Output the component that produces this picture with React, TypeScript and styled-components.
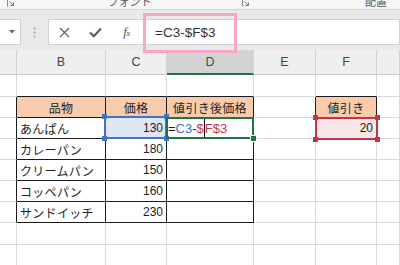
import React from "react";
import styled, { createGlobalStyle, css } from "styled-components";

const GlobalStyle = createGlobalStyle`
  html, body { margin: 0; padding: 0; background: #fff; }
  body {
    width: 400px; height: 265px; overflow: hidden;
    font-family: "Noto Sans CJK JP", "Noto Sans", sans-serif;
  }
`;

const Root = styled.div`
  position: relative;
  width: 400px;
  height: 265px;
  overflow: hidden;
  display: flex;
  flex-direction: column;
  background: #fff;
`;

/* ---------- ribbon strip ---------- */
const RibbonStrip = styled.div`
  flex: none;
  height: 9px;
  display: flex;
  overflow: hidden;
  background: #f6f6f6;
  border-bottom: 1px solid #d5d5d5;
`;

const RibbonGroup = styled.div<{ $w: number }>`
  flex: none;
  width: ${(p) => p.$w}px;
  display: flex;
  align-items: flex-end;
  padding-right: 2px;
  box-sizing: border-box;
`;

const GroupLabel = styled.span`
  flex: 1;
  text-align: center;
  font-family: "Noto Sans CJK JP", sans-serif;
  font-size: 11px;
  line-height: 11px;
  color: #555;
  margin-bottom: 2px;
  white-space: nowrap;
`;

const LauncherBox = styled.span`
  flex: none;
  display: flex;
  margin-bottom: 2px;
`;

const Launcher = () => (
  <LauncherBox>
    <svg width="8" height="8" viewBox="0 0 8 8">
      <path d="M7.5 0.5H0.5V7.5" fill="none" stroke="#8a8a8a" />
      <path d="M2.5 2.5L6.5 6.5M6.5 3.5V6.5H3.5" fill="none" stroke="#777" />
    </svg>
  </LauncherBox>
);

/* ---------- formula bar ---------- */
const FormulaBar = styled.div`
  flex: none;
  height: 40px;
  box-sizing: border-box;
  padding-top: 9px;
  display: flex;
  align-items: flex-start;
  background: #e9e9e9;
`;

const NameBox = styled.div`
  flex: none;
  width: 21px;
  height: 26px;
  box-sizing: border-box;
  background: #fff;
  border: 1px solid #cfcfcf;
  border-left: none;
  display: flex;
  align-items: center;
  justify-content: flex-end;
  padding-right: 5px;
`;

const Grip = styled.div`
  flex: none;
  width: 27px;
  height: 26px;
  display: flex;
  align-items: center;
  justify-content: center;
`;

const FxButtons = styled.div`
  flex: none;
  width: 97px;
  height: 26px;
  box-sizing: border-box;
  background: #fff;
  border: 1px solid #d3d3d3;
  border-right: none;
  display: flex;
  padding-right: 4px;
`;

const FxButton = styled.div`
  flex: none;
  width: 31px;
  display: flex;
  align-items: center;
  justify-content: center;
  color: #555;
`;

const FxGlyph = styled.span`
  font-family: "Liberation Serif", serif;
  font-style: italic;
  font-size: 13px;
  color: #555;
  letter-spacing: -0.5px;
  & > small { font-size: 9px; }
`;

const FormulaInput = styled.div`
  flex: 1;
  height: 26px;
  box-sizing: border-box;
  background: #fff;
  border: 1px solid #d3d3d3;
  display: flex;
  align-items: center;
  padding-left: 9px;
  font-family: "Liberation Sans", sans-serif;
  font-size: 13.5px;
  color: #333;
`;

const Highlight = styled.div`
  position: absolute;
  left: 143px;
  top: 13px;
  width: 94px;
  height: 40px;
  box-sizing: border-box;
  border: 3px solid #f4a8c6;
  pointer-events: none;
  z-index: 5;
`;

/* ---------- sheet ---------- */
const Sheet = styled.div`
  flex: 1;
  display: grid;
  grid-template-columns: 17px 89px 61px 87px 62px 61px 1fr;
  grid-template-rows: 25px 22px repeat(6, 21px) 22px 21px;
`;

const ColHead = styled.div<{ $active?: boolean }>`
  box-sizing: border-box;
  display: flex;
  align-items: center;
  justify-content: center;
  font-family: "Liberation Sans", sans-serif;
  font-size: 12.5px;
  color: #444;
  background: #efefef;
  border-right: 1px solid #d2d2d2;
  border-bottom: 1px solid #c9c9c9;
  ${(p) =>
    p.$active &&
    css`
      background: #d3d3d3;
      color: #1f5e3b;
      border-bottom: 2px solid #217346;
    `}
`;

const Cell = styled.div<{
  $fill?: string;
  $br?: boolean;
  $bb?: boolean;
  $align?: "left" | "right" | "center";
}>`
  position: relative;
  box-sizing: border-box;
  min-width: 0;
  display: flex;
  align-items: center;
  justify-content: ${(p) =>
    p.$align === "right" ? "flex-end" : p.$align === "center" ? "center" : "flex-start"};
  padding: 0 3px 0 3px;
  white-space: nowrap;
  background: ${(p) => p.$fill ?? "#fff"};
  border-right: 1px solid ${(p) => (p.$br ? "#1a1a1a" : "#dadada")};
  border-bottom: 1px solid ${(p) => (p.$bb ? "#1a1a1a" : "#dadada")};
`;

const JpText = styled.span`
  font-family: "Noto Sans CJK JP", sans-serif;
  font-size: 12px;
  letter-spacing: 0.3px;
  color: #1e1e1e;
`;

const NumText = styled.span`
  font-family: "Liberation Sans", sans-serif;
  font-size: 12px;
  color: #1e1e1e;
`;

const FormulaText = styled.span`
  display: flex;
  align-items: center;
  font-family: "Liberation Sans", sans-serif;
  font-size: 13px;
  color: #1e1e1e;
  margin-left: -2px;
`;

const Ref = styled.span<{ $c: string }>`
  color: ${(p) => p.$c};
`;

const Caret = styled.span`
  display: inline-block;
  width: 1px;
  height: 20px;
  background: #111;
`;

const Selection = styled.div<{ $c: string; $inset: string }>`
  position: absolute;
  inset: ${(p) => p.$inset};
  border: 2px solid ${(p) => p.$c};
  z-index: 3;
  pointer-events: none;
`;

const Handle = styled.span<{ $c: string; $pos: "tl" | "tr" | "bl" | "br"; $ring?: boolean }>`
  position: absolute;
  width: 5px;
  height: 5px;
  background: ${(p) => p.$c};
  ${(p) => (p.$pos[0] === "t" ? "top: -4px;" : "bottom: -4px;")}
  ${(p) => (p.$pos[1] === "l" ? "left: -4px;" : "right: -4px;")}
  ${(p) => p.$ring && "box-shadow: 0 0 0 1px #fff;"}
`;

type Spec = {
  content?: React.ReactNode;
  align?: "left" | "right" | "center";
  fill?: string;
  br?: boolean;
  bb?: boolean;
  sel?: React.ReactNode;
};

const ORANGE = "#f8cbad";
const BLUE = "#4472c4";
const GREEN = "#217346";
const RED = "#c3344a";

const fourHandles = (c: string) => (
  <>
    <Handle $c={c} $pos="tl" />
    <Handle $c={c} $pos="tr" />
    <Handle $c={c} $pos="bl" />
    <Handle $c={c} $pos="br" />
  </>
);

const jp = (t: string) => <JpText>{t}</JpText>;
const num = (t: string) => <NumText>{t}</NumText>;

const items: [string, string][] = [
  ["カレーパン", "180"],
  ["クリームパン", "150"],
  ["コッペパン", "160"],
  ["サンドイッチ", "230"],
];

const blank = (): Spec => ({});

const rows: Spec[][] = [
  // row 1
  [blank(), { bb: true }, { bb: true }, { bb: true }, blank(), { bb: true }, blank()],
  // row 2
  [
    { br: true },
    { content: jp("品物"), align: "center", fill: ORANGE, br: true, bb: true },
    { content: jp("価格"), align: "center", fill: ORANGE, br: true, bb: true },
    { content: jp("値引き後価格"), align: "center", fill: ORANGE, br: true, bb: true },
    { br: true },
    { content: jp("値引き"), align: "center", fill: ORANGE, br: true, bb: true },
    blank(),
  ],
  // row 3
  [
    { br: true },
    { content: jp("あんぱん"), br: true, bb: true },
    {
      content: num("130"),
      align: "right",
      fill: "#dfe7f5",
      br: true,
      bb: true,
      sel: <Selection $c={BLUE} $inset="-2px -1px -1px -2px">{fourHandles(BLUE)}</Selection>,
    },
    {
      content: (
        <FormulaText>
          =<Ref $c={BLUE}>C3</Ref>-<Ref $c={RED}>$</Ref>
          <Caret />
          <Ref $c={RED}>F$3</Ref>
        </FormulaText>
      ),
      br: true,
      bb: true,
      sel: (
        <Selection $c={GREEN} $inset="-1px -1px -1px -1px">
          <Handle $c={GREEN} $pos="br" $ring />
        </Selection>
      ),
    },
    blank(),
    {
      content: num("20"),
      align: "right",
      fill: "#f8e5e7",
      sel: <Selection $c={RED} $inset="-1px -2px -2px -1px">{fourHandles(RED)}</Selection>,
    },
    blank(),
  ],
  // rows 4-7
  ...items.map(([name, price]) => [
    { br: true },
    { content: jp(name), br: true, bb: true },
    { content: num(price), align: "right" as const, br: true, bb: true },
    { br: true, bb: true },
    blank(),
    blank(),
    blank(),
  ]),
  // rows 8-9
  [blank(), blank(), blank(), blank(), blank(), blank(), blank()],
  [blank(), blank(), blank(), blank(), blank(), blank(), blank()],
];

const colLabels = ["", "B", "C", "D", "E", "F", ""];

export default function App() {
  return (
    <>
      <GlobalStyle />
      <Root>
        <RibbonStrip>
          <RibbonGroup $w={17}>
            <GroupLabel />
            <Launcher />
          </RibbonGroup>
          <RibbonGroup $w={235}>
            <GroupLabel>フォント</GroupLabel>
            <Launcher />
          </RibbonGroup>
          <RibbonGroup $w={250}>
            <GroupLabel>配置</GroupLabel>
          </RibbonGroup>
        </RibbonStrip>

        <FormulaBar>
          <NameBox>
            <svg width="6" height="4" viewBox="0 0 6 4">
              <path d="M0 0H6L3 3.5Z" fill="#666" />
            </svg>
          </NameBox>
          <Grip>
            <svg width="3" height="11" viewBox="0 0 3 11">
              <circle cx="1.5" cy="1.5" r="1" fill="#9a9a9a" />
              <circle cx="1.5" cy="5.5" r="1" fill="#9a9a9a" />
              <circle cx="1.5" cy="9.5" r="1" fill="#9a9a9a" />
            </svg>
          </Grip>
          <FxButtons>
            <FxButton>
              <svg width="11" height="11" viewBox="0 0 11 11">
                <path d="M1 1L10 10M10 1L1 10" stroke="#666" strokeWidth="1.3" />
              </svg>
            </FxButton>
            <FxButton>
              <svg width="13" height="11" viewBox="0 0 13 11">
                <path d="M1 5.5L4.8 9.3L12 1.5" fill="none" stroke="#5a5a5a" strokeWidth="2" />
              </svg>
            </FxButton>
            <FxButton>
              <FxGlyph>
                f<small>x</small>
              </FxGlyph>
            </FxButton>
          </FxButtons>
          <FormulaInput>=C3-$F$3</FormulaInput>
        </FormulaBar>

        <Sheet>
          {colLabels.map((l, i) => (
            <ColHead key={"h" + i} $active={l === "D"}>
              {l}
            </ColHead>
          ))}
          {rows.map((r, ri) =>
            r.map((c, ci) => (
              <Cell
                key={ri + "-" + ci}
                $fill={c.fill}
                $br={c.br}
                $bb={c.bb}
                $align={c.align}
              >
                {c.content}
                {c.sel}
              </Cell>
            ))
          )}
        </Sheet>

        <Highlight />
      </Root>
    </>
  );
}
